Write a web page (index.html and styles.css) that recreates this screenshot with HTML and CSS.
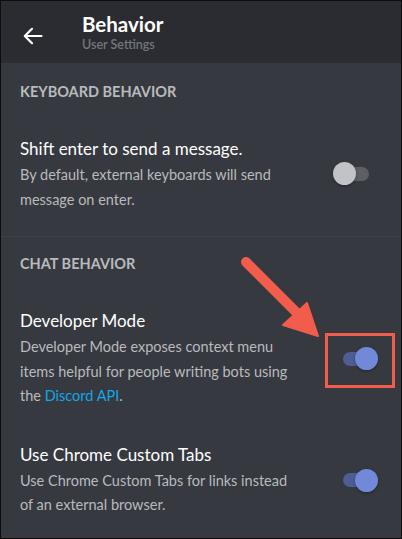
FILE: index.html
```html
<!DOCTYPE html>
<html lang="en">
<head>
  <meta charset="UTF-8">
  <meta name="viewport" content="width=device-width, initial-scale=1.0">
  <link rel="stylesheet" href="styles.css">
  <title>Behavior - User Settings</title>
</head>
<body>
  <div id="screen">
    <div class="topbar">
      <svg class="back" width="20" height="18" viewBox="0 0 20 18">
        <path d="M18.5 9H2M9 1.8L1.8 9 9 16.2" fill="none" stroke="#fff" stroke-width="2.2" stroke-linecap="round" stroke-linejoin="round"/>
      </svg>
      <div class="titles">
        <div class="title">Behavior</div>
        <div class="subtitle">User Settings</div>
      </div>
    </div>

    <div class="section">
      <div class="section-label">KEYBOARD BEHAVIOR</div>
      <div class="row">
        <div class="text">
          <div class="name">Shift enter to send a message.</div>
          <div class="desc">By default, external keyboards will send message on enter.</div>
        </div>
        <div class="toggle"></div>
      </div>
    </div>

    <div class="section divided">
      <div class="section-label">CHAT BEHAVIOR</div>
      <div class="row">
        <div class="text">
          <div class="name">Developer Mode</div>
          <div class="desc">Developer Mode exposes context menu items helpful for people writing bots using the <a class="link">Discord API</a>.</div>
        </div>
        <div class="toggle on"></div>
      </div>
      <div class="row">
        <div class="text">
          <div class="name">Use Chrome Custom Tabs</div>
          <div class="desc">Use Chrome Custom Tabs for links instead of an external browser.</div>
        </div>
        <div class="toggle on"></div>
      </div>
    </div>

    <!-- annotation -->
    <div class="highlight"></div>
    <svg class="arrow" width="402" height="539" viewBox="0 0 402 539">
      <line x1="246" y1="262" x2="296" y2="312" stroke="#f25c4c" stroke-width="10" stroke-linecap="round"/>
      <polygon points="283,325 307,303 318,336" fill="#f25c4c" stroke="#f25c4c" stroke-width="2" stroke-linejoin="round"/>
    </svg>
  </div>
</body>
</html>
```

FILE: styles.css
```css
body {
  margin: 0;
  background: #000;
  font-family: 'Lato', 'Open Sans', sans-serif;
}

#screen {
  position: relative;
  width: 400px;
  height: 537px;
  border: 1px solid #0d0d0f;
  background: #36393f;
  overflow: hidden;
}

.topbar {
  height: 62px;
  background: #2b2c31;
  display: flex;
  align-items: flex-start;
}

.back {
  margin: 26px 39px 0 22px;
}

.titles {
  padding-top: 11px;
}

.title {
  color: #fff;
  font-size: 20.5px;
  font-weight: 700;
  line-height: 24px;
}

.subtitle {
  color: #72767d;
  font-size: 12.5px;
  font-weight: 600;
  line-height: 16px;
  margin-top: 1px;
}

.section {
  padding: 0 19px 24px;
}

.section.divided {
  border-top: 1px solid #3d4046;
  padding-bottom: 0;
}

.section-label {
  color: #b9bbbe;
  font-size: 14.5px;
  font-weight: 700;
  line-height: 20px;
  padding-top: 19px;
}

.divided .section-label {
  padding-top: 17px;
}

.row {
  display: flex;
  align-items: center;
  justify-content: space-between;
  padding-top: 35px;
}

.row + .row {
  padding-top: 34px;
}

.text {
  width: 278px;
}

.name {
  color: #fff;
  font-size: 17px;
  font-weight: 400;
  line-height: 24px;
}

.desc {
  color: #b9bbbe;
  font-size: 14.5px;
  line-height: 24.5px;
  margin-top: 2px;
}

.link {
  color: #0fa8ea;
}

.toggle {
  position: relative;
  width: 29px;
  height: 14px;
  border-radius: 7px;
  background: #5d5f64;
  margin: -2px 13px 0 0;
}

.toggle::after {
  content: "";
  position: absolute;
  left: -7px;
  top: -4.5px;
  width: 23px;
  height: 23px;
  border-radius: 50%;
  background: #c2c3c6;
  box-shadow: 0 1px 3px rgba(0, 0, 0, 0.35);
}

.toggle.on {
  width: 27px;
  background: #4e5d94;
  margin: 0 12px 0 0;
}

.toggle.on::after {
  left: auto;
  right: -8px;
  background: #7289da;
}

.highlight {
  position: absolute;
  left: 324px;
  top: 332px;
  width: 64px;
  height: 49px;
  border: 3px solid #f25c4c;
}

.arrow {
  position: absolute;
  left: -1px;
  top: -1px;
}
```
